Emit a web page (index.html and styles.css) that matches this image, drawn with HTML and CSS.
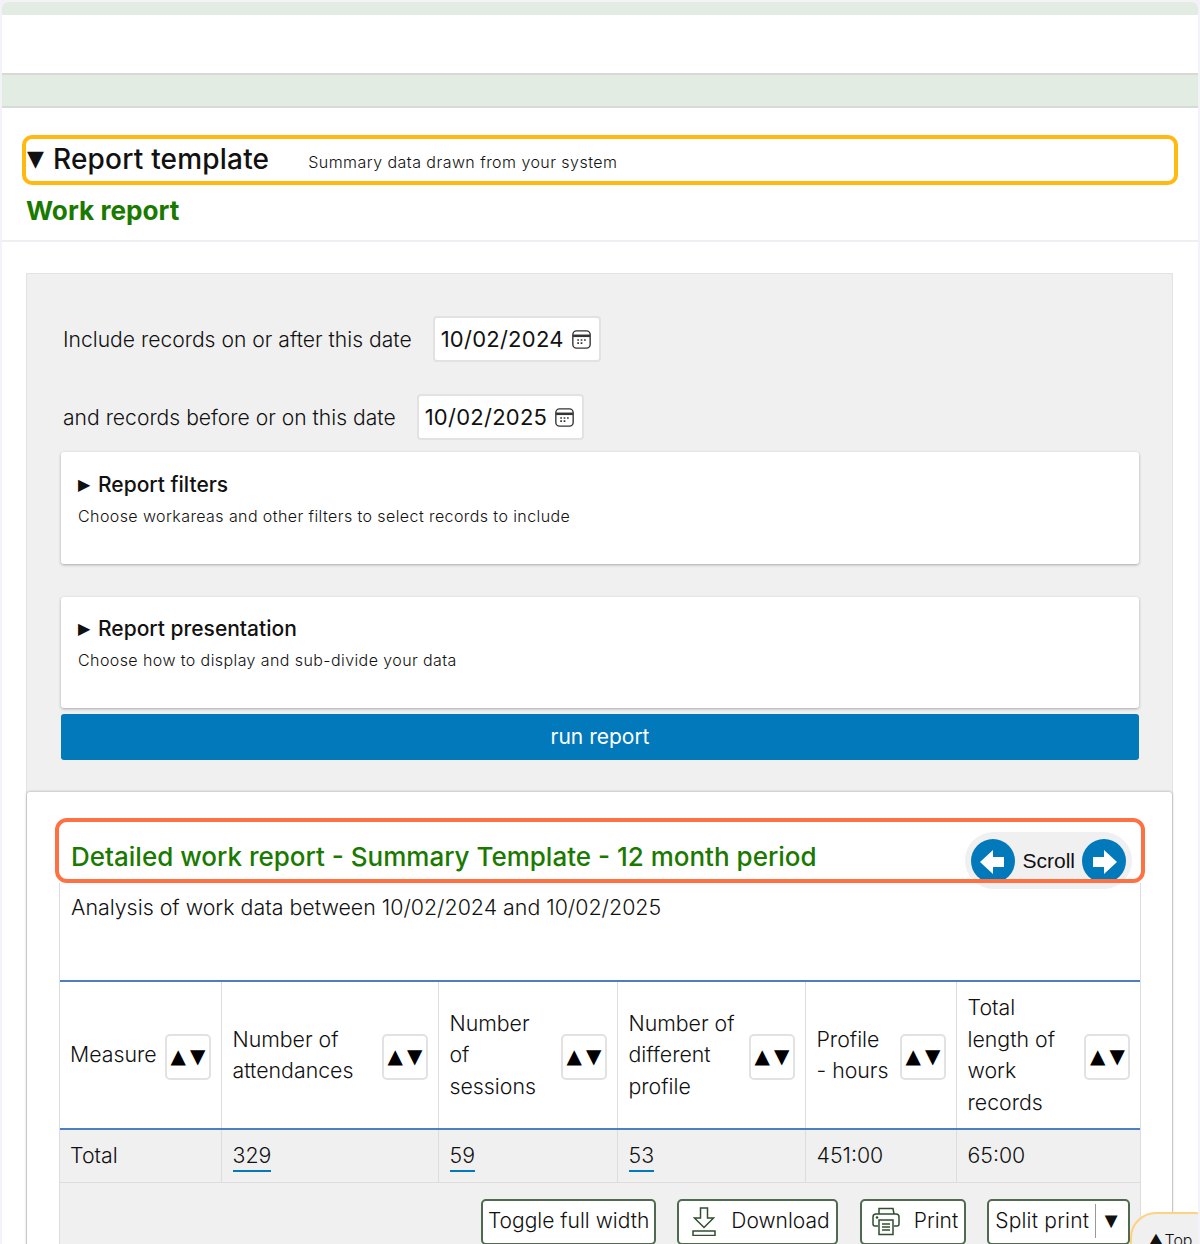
FILE: index.html
```html
<!DOCTYPE html>
<html lang="en">

<head>
  <meta charset="UTF-8">
  <meta name="viewport" content="width=device-width, initial-scale=1.0">
  <title>Work report</title>
  <link rel="stylesheet" href="styles.css">
</head>

<body>
  <div class="page">
    <div class="top-strip"></div>
    <div class="nav"></div>
    <div class="sub-strip"></div>

    <div class="template-bar">
      <span class="arrow-down">▼</span>
      <h2>Report template</h2>
      <span class="template-note">Summary data drawn from your system</span>
    </div>
    <h1 class="page-title">Work report</h1>

    <div class="panel">
      <div class="date-row date-first">
        <label>Include records on or after this date</label>
        <div class="date-input">10/02/2024
          <svg class="cal" viewBox="0 0 18 18"><rect x="0.800" y="0.800" width="16.400" height="16.400" rx="3.500" fill="none" stroke="#333" stroke-width="1.300"/><path d="M1 5.500h16" stroke="#333" stroke-width="2.400"/><path d="M5 9.500h1.600M8.200 9.500h1.600M11.400 9.500h1.600M5 12.500h1.600M8.200 12.500h1.600" stroke="#333" stroke-width="1.600"/></svg>
        </div>
      </div>
      <div class="date-row">
        <label>and records before or on this date</label>
        <div class="date-input">10/02/2025
          <svg class="cal" viewBox="0 0 18 18"><rect x="0.800" y="0.800" width="16.400" height="16.400" rx="3.500" fill="none" stroke="#333" stroke-width="1.300"/><path d="M1 5.500h16" stroke="#333" stroke-width="2.400"/><path d="M5 9.500h1.600M8.200 9.500h1.600M11.400 9.500h1.600M5 12.500h1.600M8.200 12.500h1.600" stroke="#333" stroke-width="1.600"/></svg>
        </div>
      </div>

      <div class="option-card">
        <h3><span class="arrow-right">▶</span>Report filters</h3>
        <p>Choose workareas and other filters to select records to include</p>
      </div>
      <div class="option-card card-gap">
        <h3><span class="arrow-right">▶</span>Report presentation</h3>
        <p>Choose how to display and sub-divide your data</p>
      </div>
      <button class="run-btn">run report</button>

      <div class="results">
        <div class="title-row">
          <h2>Detailed work report - Summary Template - 12 month period</h2>
          <div class="scroll-pill">
            <span class="scroll-btn"><svg viewBox="0 0 44 44"><path d="M9 23 22 11V18H33V28H22V35Z" fill="#fff"/></svg></span>
            <span>Scroll</span>
            <span class="scroll-btn"><svg viewBox="0 0 44 44"><path d="M35 23 22 11V18H11V28H22V35Z" fill="#fff"/></svg></span>
          </div>
        </div>
        <div class="results-body">
          <p class="intro">Analysis of work data between 10/02/2024 and 10/02/2025</p>
          <table>
            <colgroup>
              <col class="c1"><col class="c2"><col class="c3"><col class="c4"><col class="c5"><col class="c6">
            </colgroup>
            <thead>
              <tr>
                <th><div class="th-in"><span>Measure</span><button class="sort">▲▼</button></div></th>
                <th><div class="th-in"><span>Number of attendances</span><button class="sort">▲▼</button></div></th>
                <th><div class="th-in"><span class="narrow-a">Number of sessions</span><button class="sort">▲▼</button></div></th>
                <th><div class="th-in"><span>Number of different profile</span><button class="sort">▲▼</button></div></th>
                <th><div class="th-in"><span class="narrow-b">Profile - hours</span><button class="sort">▲▼</button></div></th>
                <th><div class="th-in"><span>Total length of work records</span><button class="sort">▲▼</button></div></th>
              </tr>
            </thead>
            <tbody>
              <tr>
                <td>Total</td>
                <td><a href="#">329</a></td>
                <td><a href="#">59</a></td>
                <td><a href="#">53</a></td>
                <td>451:00</td>
                <td>65:00</td>
              </tr>
            </tbody>
          </table>
          <div class="tools">
            <button class="tool tool-toggle">Toggle full width</button>
            <button class="tool tool-dl">
              <svg viewBox="0 0 26 30" width="26" height="30"><path d="M9.500 2h7v10h6L13 21.500 3.500 12h6Z" fill="none" stroke="#2f4f2f" stroke-width="1.500"/><rect x="2" y="25" width="22" height="4.500" fill="none" stroke="#2f4f2f" stroke-width="1.500"/></svg>
              Download
            </button>
            <button class="tool tool-pr">
              <svg viewBox="0 0 30 30" width="30" height="30"><path d="M8 8V2.500H22L23 8M7 20H4Q2 20 2 18V11Q2 8 5 8H25Q28 8 28 11V18Q28 20 26 20H23" fill="none" stroke="#2f4f2f" stroke-width="1.500"/><path d="M8 14H22V28.500H8Z" fill="none" stroke="#2f4f2f" stroke-width="1.500"/><path d="M11 18H19M11 21H19M11 24H19" stroke="#2f4f2f" stroke-width="1.400"/><circle cx="6" cy="11.500" r="1.300" fill="#2f4f2f"/></svg>
              Print
            </button>
            <button class="tool tool-split"><span class="split-label">Split print</span><span class="split-arrow">▼</span></button>
          </div>
        </div>
      </div>
    </div>

    <div class="top-btn">▲ Top</div>
  </div>
</body>

</html>
```

FILE: styles.css
```css
* {
  box-sizing: border-box;
}

body {
  margin: 0;
  padding: 2px 2px 0;
  background-color: #f3f2f8;
  font-family: Inter, "Liberation Sans", sans-serif;
  color: #111;
}

.page {
  position: relative;
  height: 1242px;
  overflow: hidden;
  background-color: #fff;
  border-radius: 6px 6px 0 0;
}

h1, h2, h3, p {
  margin: 0;
}

/* Header strips */
.top-strip {
  height: 13px;
  background-color: #e3ece2;
}

.nav {
  height: 58px;
  background-color: #fff;
}

.sub-strip {
  height: 35px;
  background-color: #e3ece2;
  border-top: 2px solid #d6d9d6;
  border-bottom: 2px solid #d8dad8;
}

/* Template heading */
.template-bar {
  display: flex;
  align-items: center;
  height: 50px;
  margin: 27px 20px 0;
  padding: 0 0 3px 1px;
  border: 4px solid #ffb90f;
  border-radius: 10px;
}

.arrow-down {
  width: 26px;
  font-family: "DejaVu Sans", sans-serif;
  font-size: 22px;
}

.template-bar h2 {
  font-size: 28px;
  font-weight: 500;
  letter-spacing: 0.2px;
}

.template-note {
  margin-left: 39px;
  margin-top: 7px;
  font-size: 16px;
  font-weight: 300;
  letter-spacing: 0.45px;
}

.page-title {
  height: 47px;
  margin: 10px 0 0;
  padding-left: 24px;
  border-bottom: 2px solid #efeff3;
  font-size: 26.200px;
  font-weight: 700;
  line-height: 32px;
  color: #1a7a00;
}

/* Grey filter panel */
.panel {
  height: 1000px;
  margin: 31px 25px 0 24px;
  padding: 42px 33px 0 34px;
  background-color: #f0f0f0;
  border: 1px solid #e3e3e3;
}

.date-row {
  display: flex;
  align-items: center;
  gap: 21px;
  height: 46px;
  margin-bottom: 32px;
  padding-left: 2px;
  font-size: 21.100px;
  font-weight: 300;
}

.date-input {
  display: flex;
  align-items: center;
  gap: 8px;
  height: 46px;
  padding: 0 8px 0 6px;
  background-color: #fff;
  border: 2px solid #e2e2e2;
  border-radius: 4px;
  font-size: 22px;
  font-weight: 400;
  letter-spacing: 0.25px;
}

.cal {
  width: 19px;
  height: 19px;
}

.option-card {
  height: 112px;
  margin-top: -20px;
  padding: 20px 17px 0;
  background-color: #fff;
  border-radius: 3px;
  box-shadow: 0 1px 3px rgba(0, 0, 0, 0.3);
}

.card-gap {
  height: 111px;
  margin-top: 33px;
  padding-top: 19px;
}

.option-card h3 {
  font-size: 21px;
  font-weight: 500;
}

.arrow-right {
  display: inline-block;
  width: 20px;
  font-family: "DejaVu Sans", sans-serif;
  font-size: 16px;
  vertical-align: 2px;
}

.option-card p {
  margin-top: 9px;
  font-size: 16px;
  font-weight: 300;
  letter-spacing: 0.41px;
}

.run-btn {
  display: block;
  width: 100%;
  height: 46px;
  margin-top: 6px;
  padding-bottom: 2px;
  background-color: #0279bb;
  color: #fff;
  border: none;
  border-radius: 3px;
  font-family: inherit;
  font-size: 21px;
  font-weight: 400;
}

/* Results card */
.results {
  height: 600px;
  margin: 32px -33px 0 -34px;
  padding: 26px 31px 0 32px;
  background-color: #fff;
  border-radius: 3px;
  box-shadow: 0 0 3px rgba(0, 0, 0, 0.35);
}

.title-row {
  position: relative;
  display: flex;
  justify-content: space-between;
  height: 65px;
  margin: 0 -4px;
  padding: 0 13px 0 16px;
}

.title-row::after {
  content: "";
  position: absolute;
  inset: 0;
  border: 4px solid #ff7043;
  border-radius: 12px;
  pointer-events: none;
}

.title-row h2 {
  padding-top: 23px;
  font-size: 26px;
  font-weight: 500;
  color: #1a7a00;
}

.scroll-pill {
  display: flex;
  align-items: center;
  gap: 7px;
  height: 57px;
  margin-top: 14px;
  padding: 0 6px;
  background-color: #f0f0f0;
  border-radius: 29px;
  font-family: "Liberation Sans", sans-serif;
  font-size: 21px;
}

.scroll-btn {
  display: flex;
  width: 44px;
  height: 44px;
  border-radius: 50%;
  background-color: #0279bb;
}

.results-body {
  height: 400px;
  border-left: 1px solid #ddd;
  border-right: 1px solid #ddd;
}

.intro {
  height: 97px;
  padding: 11px 0 0 11px;
  font-size: 21.360px;
  font-weight: 300;
}

table {
  width: 100%;
  table-layout: fixed;
  border-collapse: collapse;
}

.c1 { width: 161px; }
.c2 { width: 217px; }
.c3 { width: 179px; }
.c4 { width: 188px; }
.c5 { width: 151px; }

th {
  height: 148px;
  padding: 0 10px 0 11px;
  border-top: 2px solid #4a7fc0;
  border-bottom: 2px solid #4a7fc0;
  border-right: 1px solid #ddd;
  font-size: 21.300px;
  font-weight: 300;
  line-height: 31.500px;
  text-align: left;
}

th:first-child,
td:first-child {
  padding-left: 10px;
}

th:last-child,
td:last-child {
  border-right: none;
}

.th-in {
  display: flex;
  align-items: center;
  justify-content: space-between;
  gap: 6px;
}

.narrow-a {
  width: 90px;
}

.narrow-b {
  width: 80px;
}

.sort {
  flex: none;
  width: 46px;
  height: 46px;
  margin-top: 4px;
  padding: 0 0 2px 4px;
  background-color: #fff;
  border: 2px solid #e2e2e2;
  border-radius: 5px;
  color: #000;
  font-family: "DejaVu Sans", sans-serif;
  font-size: 20px;
  letter-spacing: 4px;
  white-space: nowrap;
}

td {
  height: 53px;
  padding: 0 11px 2px;
  background-color: #f0f0f0;
  border-bottom: 1px solid #ddd;
  border-right: 1px solid #ddd;
  font-size: 21.300px;
  font-weight: 300;
}

td a {
  color: inherit;
  text-decoration: none;
  border-bottom: 2px solid #0279bb;
  padding-bottom: 2px;
}

.tools {
  display: flex;
  justify-content: flex-end;
  gap: 21px;
  height: 100px;
  padding: 16px 10px 0 0;
  background-color: #f0f0f0;
}

.tool {
  display: flex;
  align-items: center;
  height: 46px;
  padding: 0 6px 2px;
  background-color: #fff;
  border: 2px solid #4f6a4f;
  border-radius: 5px;
  color: #111;
  font-family: inherit;
  font-size: 21px;
  font-weight: 300;
}

.tool-toggle {
  padding: 0 5px 2px;
}

.tool-dl {
  gap: 14px;
  padding-left: 12px;
}

.tool-pr {
  gap: 13px;
  margin-left: 1px;
  padding-left: 9px;
}

.split-label {
  padding-right: 6px;
  border-right: 1px solid #999;
  line-height: 34px;
  letter-spacing: 0.2px;
}

.split-arrow {
  margin-left: 4px;
  font-family: "DejaVu Sans", sans-serif;
  font-size: 22px;
}

.top-btn {
  position: absolute;
  left: 1128px;
  top: 1210px;
  width: 90px;
  height: 60px;
  padding: 16px 0 0 16px;
  background-color: #f0f0f0;
  border: 2px solid #ffd080;
  border-radius: 26px;
  font-size: 16px;
  font-weight: 300;
  word-spacing: -4px;
}
```
